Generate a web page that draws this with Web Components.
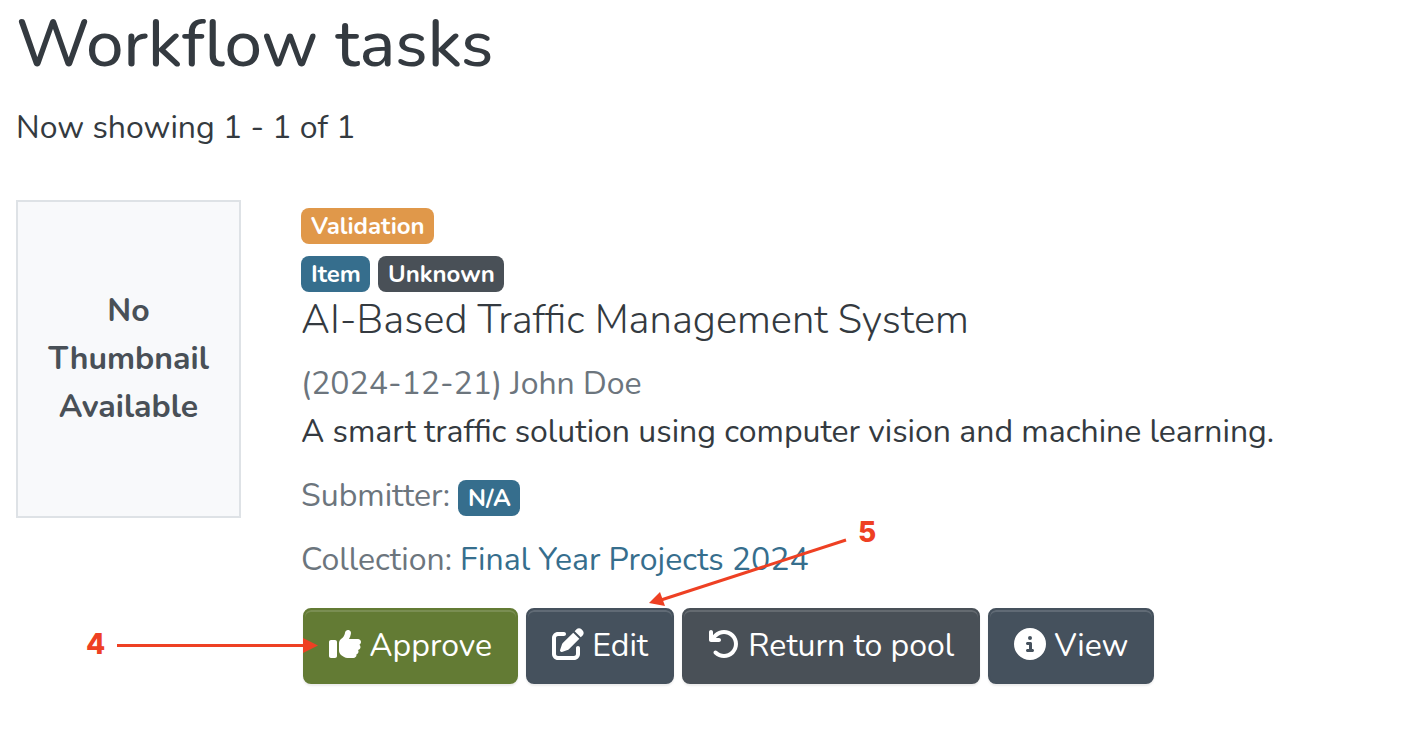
<!DOCTYPE html>
<html lang="en">
<head>
<meta charset="utf-8">
<meta name="viewport" content="width=device-width, initial-scale=1">
<title>Workflow tasks</title>
<style>
  body {
    margin: 0;
    background: #fff;
    color: #343a40;
    font: 400 32px/48px Nunito, Lato, sans-serif;
  }
</style>
</head>
<body>
<workflow-page>
  <span slot="title">Workflow tasks</span>
  <span slot="summary">Now showing 1 - 1 of 1</span>
  <workflow-task>
    <status-badge slot="status" kind="warning">Validation</status-badge>
    <status-badge slot="types" kind="info">Item</status-badge>
    <status-badge slot="types" kind="secondary">Unknown</status-badge>
    <span slot="name">AI-Based Traffic Management System</span>
    <span slot="byline">(2024-12-21) John Doe</span>
    <span slot="abstract">A smart traffic solution using computer vision and machine learning.</span>
    <status-badge slot="submitter" kind="info">N/A</status-badge>
    <span slot="collection">Final Year Projects 2024</span>
    <task-button slot="actions" kind="success" icon="thumb">Approve</task-button>
    <task-button slot="actions" kind="primary" icon="edit">Edit</task-button>
    <task-button slot="actions" kind="secondary" icon="undo">Return to pool</task-button>
    <task-button slot="actions" kind="primary" icon="info">View</task-button>
    <step-notes slot="notes"></step-notes>
  </workflow-task>
</workflow-page>

<script>
const define = (name, html, setup) => customElements.define(name, class extends HTMLElement {
  constructor() {
    super();
    this.attachShadow({ mode: 'open' }).innerHTML = html;
  }
  connectedCallback() {
    if (setup) setup(this, this.shadowRoot);
  }
});

const icons = {
  thumb: 'M313.4 32.9c26 5.2 42.9 30.5 37.7 56.5l-2.3 11.4c-5.3 26.7-15.1 52.1-28.8 75.2H464c26.5 0 48 21.5 48 48c0 18.5-10.5 34.6-25.9 42.6C497 275.4 504 288.9 504 304c0 23.4-16.8 42.9-38.9 47.1c4.4 7.3 6.9 15.8 6.9 24.9c0 21.3-13.9 39.4-33.1 45.6c.7 3.3 1.1 6.8 1.1 10.4c0 26.5-21.5 48-48 48H294.5c-19 0-37.5-5.6-53.3-16.1l-38.5-25.7C176 420.4 160 390.4 160 358.3V320 272 247.1c0-29.2 13.3-56.7 36-75l7.4-5.9c26.5-21.2 44.6-51 51.2-84.2l2.3-11.4c5.2-26 30.5-42.9 56.5-37.7zM32 192H96c17.7 0 32 14.3 32 32V448c0 17.7-14.3 32-32 32H32c-17.7 0-32-14.3-32-32V224c0-17.7 14.3-32 32-32z',
  edit: 'M471.6 21.7c-21.9-21.9-57.3-21.9-79.2 0L362.3 51.7l97.9 97.9 30.1-30.1c21.9-21.9 21.9-57.3 0-79.2L471.6 21.7zm-299.2 220c-6.1 6.1-10.8 13.6-13.5 21.9l-29.6 88.8c-2.9 8.6-.6 18.1 5.8 24.6s15.9 8.7 24.6 5.8l88.8-29.6c8.2-2.7 15.7-7.4 21.9-13.5L437.7 172.3 339.7 74.3 172.4 241.7zM96 64C43 64 0 107 0 160V416c0 53 43 96 96 96H352c53 0 96-43 96-96V320c0-17.7-14.3-32-32-32s-32 14.3-32 32v96c0 17.7-14.3 32-32 32H96c-17.7 0-32-14.3-32-32V160c0-17.7 14.3-32 32-32h96c17.7 0 32-14.3 32-32s-14.3-32-32-32H96z',
  undo: 'M125.7 160H176c17.7 0 32 14.3 32 32s-14.3 32-32 32H48c-17.7 0-32-14.3-32-32V64c0-17.7 14.3-32 32-32s32 14.3 32 32v51.2L97.6 97.6c87.5-87.5 229.3-87.5 316.8 0s87.5 229.3 0 316.8s-229.3 87.5-316.8 0c-12.5-12.5-12.5-32.8 0-45.3s32.8-12.5 45.3 0c62.5 62.5 163.8 62.5 226.3 0s62.5-163.8 0-226.3s-163.8-62.5-226.3 0L125.7 160z',
  info: 'M256 512A256 256 0 1 0 256 0a256 256 0 1 0 0 512zM216 336h24V272H216c-13.3 0-24-10.7-24-24s10.7-24 24-24h48c13.3 0 24 10.7 24 24v88h8c13.3 0 24 10.7 24 24s-10.7 24-24 24H216c-13.3 0-24-10.7-24-24s10.7-24 24-24zm40-208a32 32 0 1 1 0 64 32 32 0 1 1 0-64z'
};

define('workflow-page', `
  <style>
    :host { display: block; padding: 0 16px 48px; }
    h1 { margin: 0 0 16px; font-size: 67px; line-height: 88px; font-weight: 500; }
    p { margin: 0 0 48px; }
  </style>
  <main>
    <h1><slot name="title"></slot></h1>
    <p><slot name="summary"></slot></p>
    <slot></slot>
  </main>`);

define('workflow-task', `
  <style>
    :host { display: grid; grid-template-columns: 225px minmax(0, 1fr); column-gap: 60px; align-items: start; }
    .thumb {
      box-sizing: border-box; min-height: 318px; padding: 0 24px;
      display: flex; align-items: center; justify-content: center; text-align: center;
      border: 2px solid #dee2e6; background: #f8f9fb; color: #495057; font-weight: 700;
    }
    .body { padding-top: 8px; }
    .badges { display: flex; gap: 8px; }
    .badges + .badges { margin-top: 12px; }
    h2 { margin: 4px 0 16px; font-size: 40px; line-height: 48px; font-weight: 300; }
    p { margin: 0; }
    .muted { color: #6c757d; }
    .field { display: flex; align-items: baseline; gap: 8px; margin-top: 16px; color: #6c757d; }
    a { color: #366e8d; text-decoration: none; }
    .actions { position: relative; display: flex; flex-wrap: wrap; gap: 8px; margin: 24px 0 0 2px; }
  </style>
  <div class="thumb">No Thumbnail Available</div>
  <div class="body">
    <div class="badges"><slot name="status"></slot></div>
    <div class="badges"><slot name="types"></slot></div>
    <h2><slot name="name"></slot></h2>
    <p class="muted"><slot name="byline"></slot></p>
    <p><slot name="abstract"></slot></p>
    <div class="field"><span>Submitter:</span><slot name="submitter"></slot></div>
    <div class="field"><span>Collection:</span><a href="#"><slot name="collection"></slot></a></div>
    <div class="actions"><slot name="actions"></slot><slot name="notes"></slot></div>
  </div>`);

define('status-badge', `
  <style>
    :host {
      display: block; padding: 0 9px 0 10px; border-radius: 8px;
      font-size: 24px; line-height: 36px; font-weight: 700; color: #fff; background: #366e8d;
    }
    :host([kind="warning"]) { background: #e0984a; }
    :host([kind="secondary"]) { background: #495057; }
  </style>
  <slot></slot>`);

define('task-button', `
  <style>
    :host { display: block; --fill: #45515d; }
    :host([kind="success"]) { --fill: #637b34; }
    :host([kind="secondary"]) { --fill: #495057; }
    button {
      display: block; padding: 12px 24px; white-space: nowrap;
      border: 2px solid var(--fill); border-radius: 8px; background: var(--fill);
      color: #fff; font: inherit; cursor: pointer;
      box-shadow: inset 0 2px 0 rgba(255, 255, 255, .15), 0 2px 2px rgba(0, 0, 0, .075);
    }
    svg { width: 32px; height: 32px; vertical-align: -4px; fill: currentColor; }
  </style>
  <button type="button"><svg viewBox="0 0 512 512" aria-hidden="true"><path/></svg> <slot></slot></button>`,
  (host, root) => root.querySelector('path').setAttribute('d', icons[host.getAttribute('icon')]));

/* Numbered arrows that lie over the action row. */
define('step-notes', `
  <style>
    :host {
      position: absolute; top: -90px; left: -220px; width: 800px; height: 150px;
      pointer-events: none; color: #ee4023; font: 800 28px/32px Inter, sans-serif;
    }
    svg { display: block; width: 100%; height: 100%; overflow: visible; }
    line { stroke: currentColor; stroke-width: 3; }
    polygon, text { fill: currentColor; }
  </style>
  <svg viewBox="0 0 800 150" role="img" aria-label="Steps 4 and 5">
    <text x="3" y="136">4</text>
    <line x1="34" y1="127.5" x2="222" y2="127.5"/>
    <polygon points="220,120 235,127.500 220,135"/>
    <text x="775" y="24">5</text>
    <line x1="763" y1="22" x2="578" y2="82"/>
    <polygon points="566,85 577,74 582,88"/>
  </svg>`);
</script>
</body>
</html>
